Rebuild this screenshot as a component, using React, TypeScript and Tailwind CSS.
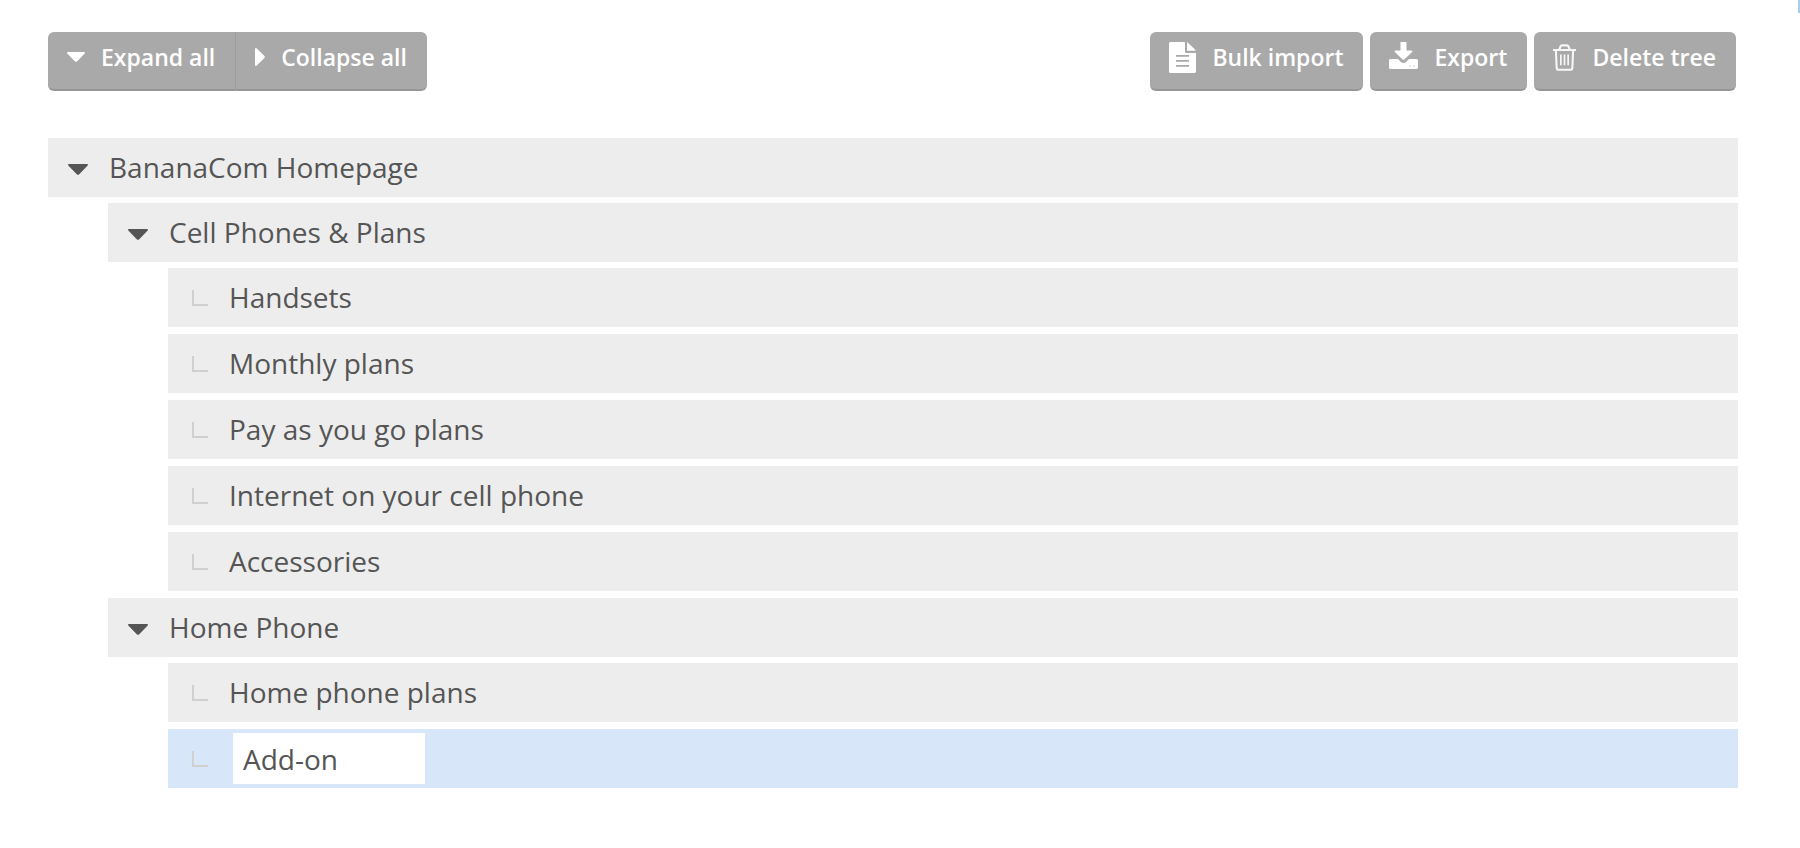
import { useState, type ReactNode } from "react";
import clsx from "clsx";

type TreeNode = {
  id: string;
  label: string;
  editing?: boolean;
  children?: TreeNode[];
};

const TREE: TreeNode[] = [
  {
    id: "home",
    label: "BananaCom Homepage",
    children: [
      {
        id: "cell",
        label: "Cell Phones & Plans",
        children: [
          { id: "handsets", label: "Handsets" },
          { id: "monthly", label: "Monthly plans" },
          { id: "payg", label: "Pay as you go plans" },
          { id: "internet", label: "Internet on your cell phone" },
          { id: "accessories", label: "Accessories" },
        ],
      },
      {
        id: "homephone",
        label: "Home Phone",
        children: [
          { id: "hp-plans", label: "Home phone plans" },
          { id: "addon", label: "Add-on", editing: true },
        ],
      },
    ],
  },
];

const PARENT_IDS = ["home", "cell", "homephone"];

function CaretDown({ className }: { className?: string }) {
  return (
    <svg viewBox="0 0 20 11" className={className} fill="currentColor" aria-hidden="true">
      <path d="M1 0h18c.9 0 1.300.9.700 1.500l-8.700 8.900c-.6.6-1.400.6-2 0L.3 1.500C-.3.9.1 0 1 0z" />
    </svg>
  );
}

function CaretRight({ className }: { className?: string }) {
  return (
    <svg viewBox="0 0 10 18" className={className} fill="currentColor" aria-hidden="true">
      <path d="M0 1C0 .1.900-.3 1.500.3l7.900 7.800c.5.5.5 1.300 0 1.800l-7.900 7.800C.9 18.300 0 17.900 0 17z" />
    </svg>
  );
}

function FileIcon() {
  return (
    <svg viewBox="0 0 27 31" className="h-[31px] w-[27px]" fill="currentColor" aria-hidden="true">
      <path
        fillRule="evenodd"
        d="M1.500 0H16v9.500c0 .8.700 1.500 1.500 1.500H27v18.500c0 .8-.7 1.500-1.500 1.500h-24C.7 31 0 30.300 0 29.500v-28C0 .7.7 0 1.500 0zM7 13v1.800h13V13zm0 5v1.800h13V18zm0 5v1.800h13V23z"
      />
      <path d="M18 .3c.5.1.9.4 1.200.7l6.800 6.500c.3.400.5.700.7 1.200H18z" />
    </svg>
  );
}

function ExportIcon() {
  return (
    <svg viewBox="0 0 29 27" className="mb-1 h-[27px] w-[29px]" fill="currentColor" aria-hidden="true">
      <path d="M11.500 0h6v8.500h5c.9 0 1.200.9.600 1.500l-7.800 7.500c-.5.500-1.200.5-1.700 0L5.900 10c-.6-.6-.3-1.500.6-1.500h5z" />
      <path
        fillRule="evenodd"
        d="M1.500 17H9l3 2.900c1.400 1.300 3.600 1.300 5 0l3-2.900h7.500c.8 0 1.500.7 1.500 1.500v7c0 .8-.7 1.500-1.500 1.500h-26C.7 27 0 26.300 0 25.500v-7c0-.8.7-1.500 1.500-1.500zM20.500 23.500v1h1v-1zm4 0v1h1v-1z"
      />
    </svg>
  );
}

function TrashIcon() {
  return (
    <svg
      viewBox="0 0 24 28"
      className="h-[27px] w-[23px] opacity-90"
      fill="none"
      stroke="currentColor"
      strokeWidth="2.200"
      aria-hidden="true"
    >
      <path d="M0 6.200h24M6.500 5.500 8 2.300c.2-.6.700-.9 1.300-.9h5.400c.6 0 1.100.3 1.300.9l1.500 3.200" />
      <path d="M3 6.500l.8 18c.1 1.500 1 2.300 2.300 2.300h11.800c1.300 0 2.200-.8 2.300-2.300l.8-18" />
      <path d="M8.200 11v11M12 11v11M15.800 11v11" strokeWidth="1.800" />
    </svg>
  );
}

function ToolbarButton({
  icon,
  children,
  className,
  onClick,
}: {
  icon: ReactNode;
  children: ReactNode;
  className?: string;
  onClick?: () => void;
}) {
  return (
    <button
      type="button"
      onClick={onClick}
      className={clsx(
        "flex h-[59px] items-center gap-4 border-b-2 border-[#969696] bg-[#a9a9a9] pr-5 pb-[6px] pl-[19px] text-[23px] font-semibold whitespace-nowrap text-white hover:bg-[#9f9f9f]",
        className,
      )}
    >
      {icon}
      <span>{children}</span>
    </button>
  );
}

function TreeItem({
  node,
  open,
  onToggle,
}: {
  node: TreeNode;
  open: string[];
  onToggle: (id: string) => void;
}) {
  const [value, setValue] = useState(node.label);
  const isOpen = open.includes(node.id);

  return (
    <li>
      <div
        className={clsx(
          "flex h-[59px] items-center text-[28px]",
          node.editing ? "bg-[#d7e7f9]" : "bg-[#ededed]",
        )}
      >
        {node.children ? (
          <button
            type="button"
            aria-expanded={isOpen}
            onClick={() => onToggle(node.id)}
            className="flex h-full items-center pl-5 text-left"
          >
            <span className="flex w-[41px] items-center">
              {isOpen ? (
                <CaretDown className="mt-1 h-[11px] w-5 text-[#555]" />
              ) : (
                <CaretRight className="ml-1 h-[18px] w-[10px] text-[#555]" />
              )}
            </span>
            <span className="pb-[2px]">{node.label}</span>
          </button>
        ) : (
          <>
            <span className="ml-6 h-4 w-4 shrink-0 border-b-2 border-l-2 border-[#d0d0d0]" />
            {node.editing ? (
              <input
                type="text"
                aria-label="Item name"
                value={value}
                onChange={(e) => setValue(e.target.value)}
                className="ml-[25px] h-[51px] w-48 bg-white px-[10px] outline-none"
              />
            ) : (
              <span className="ml-[21px] pb-[2px]">{node.label}</span>
            )}
          </>
        )}
      </div>
      {node.children && isOpen && (
        <ul className="mt-[6px] ml-[60px] flex flex-col gap-[7px]">
          {node.children.map((child) => (
            <TreeItem key={child.id} node={child} open={open} onToggle={onToggle} />
          ))}
        </ul>
      )}
    </li>
  );
}

export default function App() {
  const [open, setOpen] = useState<string[]>(PARENT_IDS);

  const toggle = (id: string) =>
    setOpen((prev) => (prev.includes(id) ? prev.filter((x) => x !== id) : [...prev, id]));

  return (
    <div className="relative min-h-screen bg-white pt-8 pr-[62px] pb-14 pl-12 font-['Open_Sans',sans-serif] text-[#555]">
      {/* edge of the side panel */}
      <div className="absolute top-0 right-0 h-[13px] w-[2px] bg-[#a5cdf0]" />

      <div className="flex items-start justify-between pr-[2px]">
        <div className="flex">
          <ToolbarButton
            className="rounded-l-md border-r border-r-[#9c9c9c]"
            icon={<CaretDown className="mb-[2px] h-[10px] w-[18px]" />}
            onClick={() => setOpen(PARENT_IDS)}
          >
            Expand all
          </ToolbarButton>
          <ToolbarButton
            className="rounded-r-md"
            icon={<CaretRight className="mb-[2px] h-[18px] w-[10px]" />}
            onClick={() => setOpen([])}
          >
            Collapse all
          </ToolbarButton>
        </div>
        <div className="flex gap-[7px]">
          <ToolbarButton className="rounded-md" icon={<FileIcon />}>
            Bulk import
          </ToolbarButton>
          <ToolbarButton className="rounded-md" icon={<ExportIcon />}>
            Export
          </ToolbarButton>
          <ToolbarButton className="rounded-md" icon={<TrashIcon />}>
            Delete tree
          </ToolbarButton>
        </div>
      </div>

      <ul className="mt-[47px]">
        {TREE.map((node) => (
          <TreeItem key={node.id} node={node} open={open} onToggle={toggle} />
        ))}
      </ul>
    </div>
  );
}
